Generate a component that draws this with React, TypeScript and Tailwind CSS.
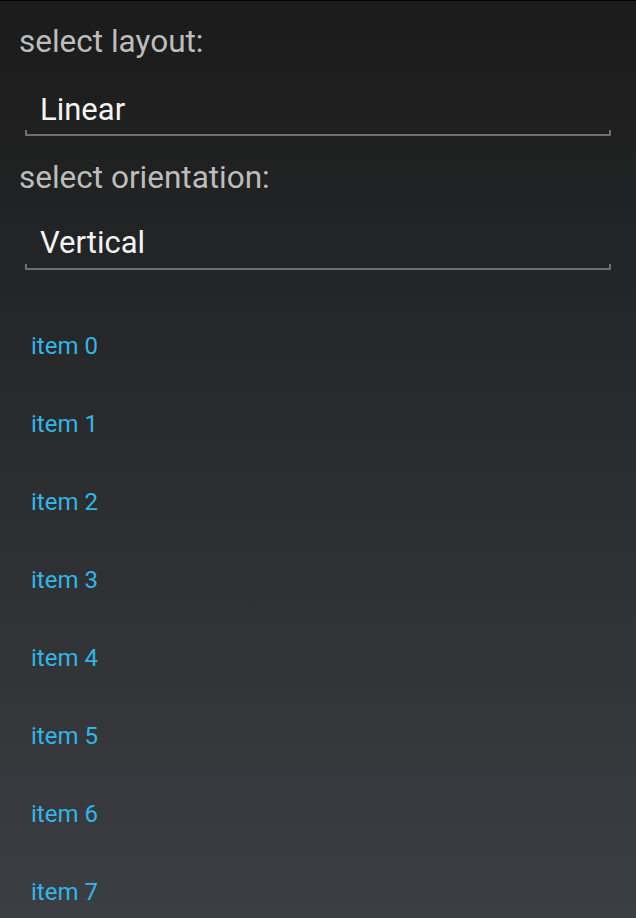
import React from "react"

const items = ["item 0", "item 1", "item 2", "item 3", "item 4", "item 5", "item 6", "item 7"]

function Label({ text, className }: { text: string; className: string }) {
  return (
    <div className={`pl-[19px] text-[31.5px] leading-none text-[#bdbdbd] ${className}`}>{text}</div>
  )
}

function Spinner({ value, textTop, lineTop }: { value: string; textTop: string; lineTop: string }) {
  return (
    <div className="mx-[25px]">
      <div className={`pl-[15px] text-[31px] leading-none text-[#f4f4f4] ${textTop}`}>{value}</div>
      {/* holo underline with small ticks at both ends */}
      <div className={`h-[6px] border-x-2 border-b-2 border-[#6e6e6e] ${lineTop}`} />
    </div>
  )
}

export default function App() {
  return (
    <div
      className="h-[918px] w-[636px] overflow-hidden border-t border-black bg-linear-to-b from-[#1b1b1b] to-[#3b3e43]"
      style={{ fontFamily: "Roboto, 'Noto Sans', sans-serif" }}
    >
      <Label text="select layout:" className="mt-[25px]" />
      <Spinner value="Linear" textTop="mt-[36px]" lineTop="mt-[5px]" />
      <Label text="select orientation:" className="mt-[26px]" />
      <Spinner value="Vertical" textTop="mt-[34px]" lineTop="mt-[6px]" />
      <div className="mt-[64px] flex flex-col gap-[54px] pl-[31px]">
        {items.map((item) => (
          <div key={item} className="text-[24px] leading-none text-[#33b5e5]">
            {item}
          </div>
        ))}
      </div>
    </div>
  )
}
